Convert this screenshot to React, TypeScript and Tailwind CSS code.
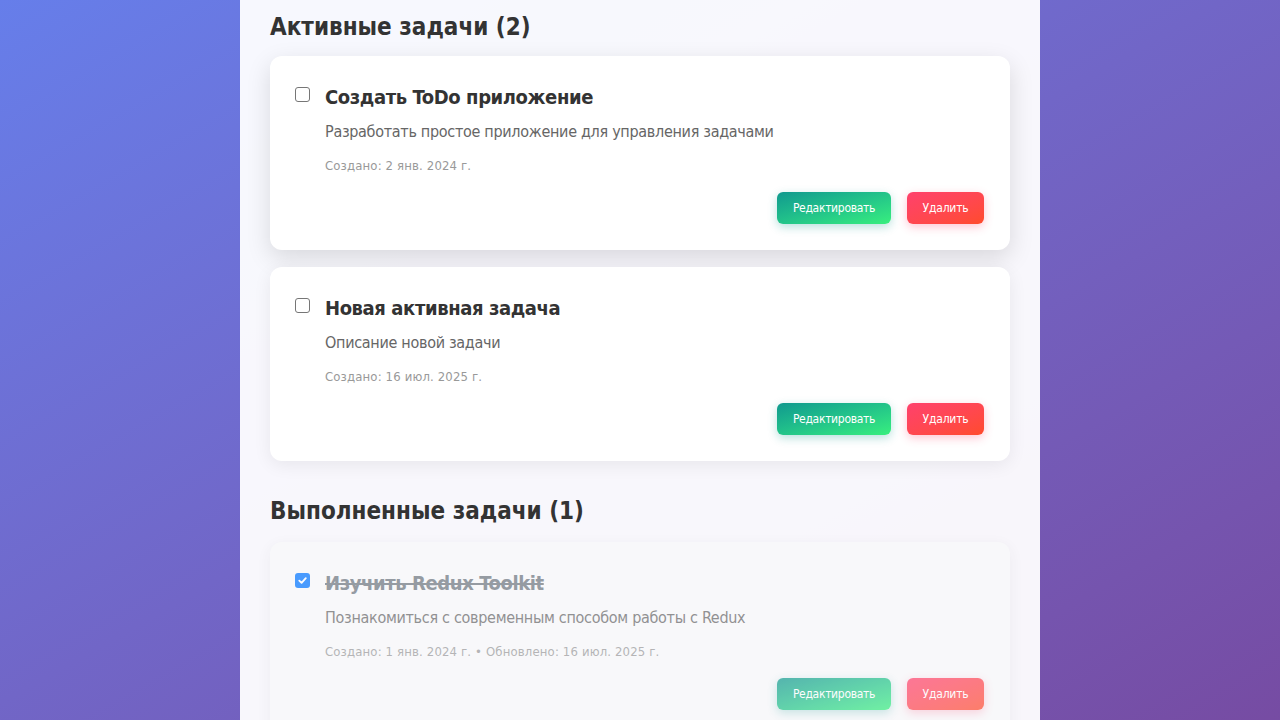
import React from "react";

type Task = {
  title: string;
  desc: string;
  meta: string;
  done?: boolean;
  strong?: boolean;
};

const active: Task[] = [
  {
    title: "Создать ToDo приложение",
    desc: "Разработать простое приложение для управления задачами",
    meta: "Создано: 2 янв. 2024 г.",
    strong: true,
  },
  {
    title: "Новая активная задача",
    desc: "Описание новой задачи",
    meta: "Создано: 16 июл. 2025 г.",
  },
];

const done: Task[] = [
  {
    title: "Изучить Redux Toolkit",
    desc: "Познакомиться с современным способом работы с Redux",
    meta: "Создано: 1 янв. 2024 г. • Обновлено: 16 июл. 2025 г.",
    done: true,
  },
];

function Checkbox({ checked }: { checked?: boolean }) {
  if (checked) {
    return (
      <div className="mt-[2px] flex h-[15px] w-[15px] shrink-0 items-center justify-center rounded-[3px] bg-[#0075ff]">
        <svg width="11" height="11" viewBox="0 0 12 12" fill="none">
          <path d="M2.5 6.2 L5 8.6 L9.6 3.4" stroke="white" strokeWidth="2" strokeLinecap="round" strokeLinejoin="round" />
        </svg>
      </div>
    );
  }
  return <div className="mt-[2px] h-[15px] w-[15px] shrink-0 rounded-[3px] border border-[#767676] bg-white" />;
}

function Card({ t }: { t: Task }) {
  return (
    <div
      className={
        "rounded-[12px] pl-[25px] pr-[26px] pt-[29px] pb-[26px] " +
        (t.done
          ? "bg-[#f8f9fa] opacity-70 shadow-[0_4px_15px_rgba(0,0,0,0.06)]"
          : t.strong
          ? "bg-white shadow-[0_8px_25px_rgba(0,0,0,0.13)]"
          : "bg-white shadow-[0_4px_18px_rgba(0,0,0,0.07)]")
      }
    >
      <div className="flex gap-[15px]">
        <Checkbox checked={t.done} />
        <div className="flex-1">
          <h3
            className={
              "text-[20px] font-bold leading-[24px] tracking-[-0.4px] " +
              (t.done ? "text-[#6c757d] line-through" : "text-[#333]")
            }
          >
            {t.title}
          </h3>
          <p className="mt-[11px] text-[16px] leading-[24px] tracking-[-0.3px] text-[#666]">{t.desc}</p>
          <p className="mt-[12px] text-[13px] leading-[20px] tracking-[0.15px] text-[#999]">{t.meta}</p>
        </div>
      </div>
      <div className="mt-[16px] flex justify-end gap-[16px]">
        <button className="h-[32px] w-[114px] rounded-[6px] bg-gradient-to-br from-[#11998e] to-[#38ef7d] text-[12px] tracking-[-0.3px] text-white shadow-[0_3px_10px_rgba(17,153,142,0.3)]">
          Редактировать
        </button>
        <button className="h-[32px] w-[77px] rounded-[6px] bg-gradient-to-br from-[#ff416c] to-[#ff4b2b] text-[12px] tracking-[-0.2px] text-white shadow-[0_3px_10px_rgba(255,65,108,0.3)]">
          Удалить
        </button>
      </div>
    </div>
  );
}

export default function App() {
  return (
    <div
      className="min-h-[720px] w-full bg-gradient-to-br from-[#667eea] to-[#764ba2]"
      style={{ fontFamily: '"DejaVu Sans Condensed", "DejaVu Sans", Verdana, sans-serif' }}
    >
      <div className="mx-auto w-[800px] min-h-[720px] bg-white/95 px-[30px] pt-[12px]">
        <h2 className="text-[24px] font-bold leading-[30px] text-[#333]">Активные задачи (2)</h2>
        <div className="mt-[14px] flex flex-col gap-[17px]">
          {active.map((t) => (
            <Card key={t.title} t={t} />
          ))}
        </div>
        <h2 className="mt-[35px] text-[24px] font-bold leading-[30px] text-[#333]">
          Выполненные задачи (1)
        </h2>
        <div className="mt-[16px] flex flex-col gap-[17px]">
          {done.map((t) => (
            <Card key={t.title} t={t} />
          ))}
        </div>
      </div>
    </div>
  );
}
